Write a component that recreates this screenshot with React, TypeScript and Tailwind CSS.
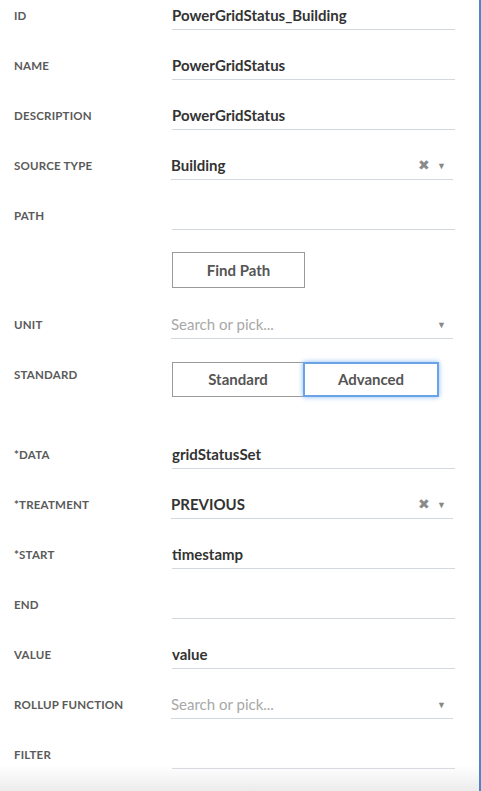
import React from "react";

const font = { fontFamily: "Lato, 'Open Sans', Arial, sans-serif" };

function Label({ children }: { children: React.ReactNode }) {
  return (
    <div className="w-[172px] pl-[14px] pt-[9px] text-[11.5px] font-bold uppercase tracking-[0.2px] text-[#5a5a5a] leading-[14px]">
      {children}
    </div>
  );
}

function TextField({ value }: { value?: string }) {
  return (
    <div className="w-[283px] h-[30px] pt-[5px] border-b border-[#d3d8de] text-[15px] font-bold text-[#333] leading-[20px]">
      {value}
    </div>
  );
}

function SelectField({ value, placeholder }: { value?: string; placeholder?: string }) {
  return (
    <div className="-ml-px w-[282px] h-[30px] pt-[5px] border-b border-[#d3d8de] flex items-start leading-[20px]">
      {value ? (
        <span className="flex-1 text-[15px] font-bold text-[#333]">{value}</span>
      ) : (
        <span className="flex-1 text-[15px] text-[#a8a8a8]">{placeholder}</span>
      )}
      {value && <span className="text-[14px] text-[#8a8a8a] mr-[7px]">✖</span>}
      <span className="text-[9px] text-[#888] mr-[7px] mt-[1px]">▼</span>
    </div>
  );
}

function Row({ label, children }: { label: string; children: React.ReactNode }) {
  return (
    <div className="flex h-[50px]">
      <Label>{label}</Label>
      <div>{children}</div>
    </div>
  );
}

export default function App() {
  return (
    <div style={font} className="relative w-[481px] h-[791px] bg-white border-r-2 border-[#4a86c8] overflow-hidden">
      <Row label="ID">
        <TextField value="PowerGridStatus_Building" />
      </Row>
      <Row label="Name">
        <TextField value="PowerGridStatus" />
      </Row>
      <Row label="Description">
        <TextField value="PowerGridStatus" />
      </Row>
      <Row label="Source Type">
        <SelectField value="Building" />
      </Row>
      <Row label="Path">
        <TextField />
      </Row>
      <div className="h-[59px] pl-[172px] pt-[2px]">
        <button className="w-[133px] h-[36px] border border-[#9a9a9a] bg-white text-[15px] font-bold text-[#555]">
          Find Path
        </button>
      </div>
      <Row label="Unit">
        <SelectField placeholder="Search or pick..." />
      </Row>
      <div className="flex h-[80px]">
        <Label>Standard</Label>
        <div className="flex pt-[3px]">
          <button className="w-[131px] h-[35px] border border-[#9a9a9a] border-r-0 bg-white text-[15px] font-bold text-[#555]">
            Standard
          </button>
          <button className="w-[136px] h-[35px] border-2 border-[#6aa3e6] shadow-[0_0_5px_#8bb9f0] bg-white text-[15px] font-bold text-[#555]">
            Advanced
          </button>
        </div>
      </div>
      <Row label="*Data">
        <TextField value="gridStatusSet" />
      </Row>
      <Row label="*Treatment">
        <SelectField value="PREVIOUS" />
      </Row>
      <Row label="*Start">
        <TextField value="timestamp" />
      </Row>
      <Row label="End">
        <TextField />
      </Row>
      <Row label="Value">
        <TextField value="value" />
      </Row>
      <Row label="Rollup Function">
        <SelectField placeholder="Search or pick..." />
      </Row>
      <Row label="Filter">
        <TextField />
      </Row>
      <div className="absolute left-0 right-0 bottom-0 h-[26px] bg-gradient-to-b from-white/0 to-[#ececec] pointer-events-none" />
    </div>
  );
}
